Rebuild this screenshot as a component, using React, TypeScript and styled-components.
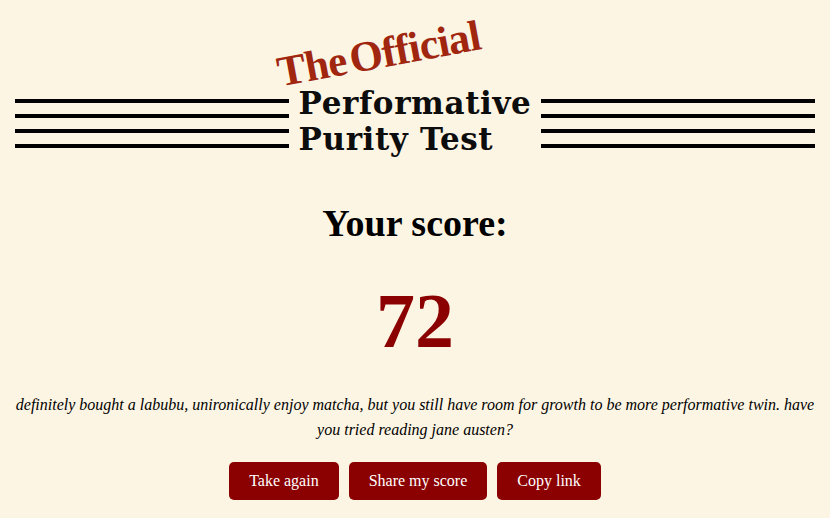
import styled, { createGlobalStyle } from "styled-components";

const GlobalStyle = createGlobalStyle`
  body {
    margin: 0;
    background: #fdf5e3;
    font-family: "Liberation Serif", "Times New Roman", serif;
    color: #000;
  }
`;

const Page = styled.main`
  display: flex;
  flex-direction: column;
  align-items: center;
  padding: 32px 15px 20px;
  text-align: center;
`;

const Masthead = styled.header`
  display: flex;
  flex-direction: column;
  align-items: center;
  width: 100%;
`;

const Kicker = styled.div`
  height: 40px;
  font-family: "Liberation Serif", serif;
  font-size: 43px;
  line-height: 40px;
  font-weight: 700;
  letter-spacing: -0.8px;
  word-spacing: -6px;
  color: #a0260f;
  white-space: nowrap;
  transform: translate(-36px, 2px) rotate(-10.5deg);
`;

const Banner = styled.div`
  display: flex;
  align-items: flex-start;
  gap: 10px;
  width: 100%;
  margin-top: 13px;
`;

const LineStack = styled.div`
  flex: 1;
  display: flex;
  flex-direction: column;
  gap: 11px;
  margin-top: 14px;
`;

const Rule = styled.span`
  display: block;
  height: 4px;
  background: #000;
`;

const Title = styled.h1`
  margin: 0;
  font-family: "DejaVu Serif", serif;
  font-size: 31px;
  line-height: 36px;
  font-weight: 700;
  letter-spacing: 0.6px;
  text-align: left;
  color: #0d0d0d;
  white-space: nowrap;
`;

const ScoreLabel = styled.h2`
  margin: 44px 0 0;
  font-size: 38px;
  font-weight: 700;
`;

const ScoreValue = styled.div`
  margin-top: 31px;
  font-size: 78px;
  font-weight: 700;
  color: #8b0000;
`;

const Verdict = styled.p`
  margin: 26px 0 0;
  font-size: 16px;
  line-height: 25px;
  font-style: italic;
`;

const Actions = styled.div`
  display: flex;
  gap: 10px;
  margin-top: 20px;
`;

const Button = styled.button`
  padding: 10px 20px;
  border: none;
  border-radius: 5px;
  background: #8b0000;
  color: #fff;
  font-family: "Liberation Serif", serif;
  font-size: 16px;
  line-height: 18px;
  cursor: pointer;
`;

function Lines() {
  return (
    <LineStack>
      <Rule />
      <Rule />
      <Rule />
      <Rule />
    </LineStack>
  );
}

export default function App() {
  return (
    <>
      <GlobalStyle />
      <Page>
        <Masthead>
          <Kicker>The Official</Kicker>
          <Banner>
            <Lines />
            <Title>
              Performative
              <br />
              Purity Test
            </Title>
            <Lines />
          </Banner>
        </Masthead>

        <ScoreLabel>Your score:</ScoreLabel>
        <ScoreValue>72</ScoreValue>
        <Verdict>
          definitely bought a labubu, unironically enjoy matcha, but you still
          have room for growth to be more performative twin. have you tried
          reading jane austen?
        </Verdict>

        <Actions>
          <Button>Take again</Button>
          <Button>Share my score</Button>
          <Button>Copy link</Button>
        </Actions>
      </Page>
    </>
  );
}
